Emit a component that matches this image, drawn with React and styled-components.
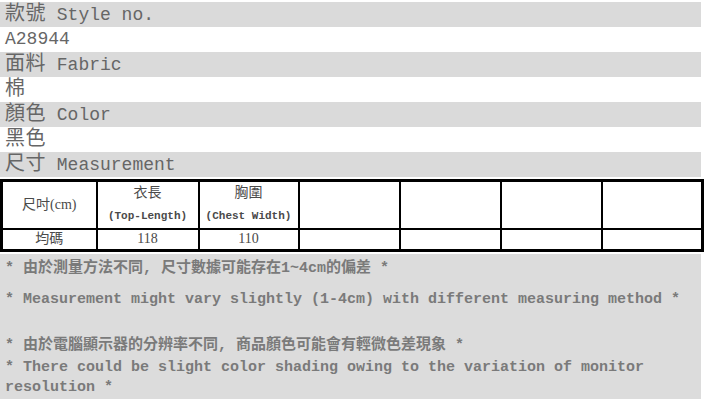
import styled, { createGlobalStyle } from "styled-components";

const GlobalStyle = createGlobalStyle`
  body {
    margin: 0;
    background: #fff;
    font-family: "Liberation Mono", "Noto Sans CJK TC", monospace;
  }
`;

const rows = [
  { cjk: "款號", latin: "Style no.", shade: true },
  { cjk: "", latin: "A28944", shade: false },
  { cjk: "面料", latin: "Fabric", shade: true },
  { cjk: "棉", latin: "", shade: false },
  { cjk: "顏色", latin: "Color", shade: true },
  { cjk: "黑色", latin: "", shade: false },
  { cjk: "尺寸", latin: "Measurement", shade: true },
];

const App = () => {
  return (
    <Page>
      <GlobalStyle />
      {rows.map((r, i) => (
        <InfoRow key={i} shade={r.shade}>
          {r.cjk && <Cjk>{r.cjk}</Cjk>}
          {r.cjk && r.latin ? " " : ""}
          {r.latin}
        </InfoRow>
      ))}

      <SizeTable>
        <colgroup>
          <col style={{ width: 95 }} />
          <col style={{ width: 102 }} />
          <col style={{ width: 100 }} />
          <col style={{ width: 101 }} />
          <col style={{ width: 101 }} />
          <col style={{ width: 101 }} />
          <col style={{ width: 101 }} />
        </colgroup>
        <tbody>
          <HeadRow>
            <Cell>尺吋(cm)</Cell>
            <Cell>
              <CellTop>衣長</CellTop>
              <CellSub>(Top-Length)</CellSub>
            </Cell>
            <Cell>
              <CellTop>胸圍</CellTop>
              <CellSub>(Chest Width)</CellSub>
            </Cell>
            <Cell />
            <Cell />
            <Cell />
            <Cell />
          </HeadRow>
          <ValueRow>
            <Cell>均碼</Cell>
            <Cell>118</Cell>
            <Cell>110</Cell>
            <Cell />
            <Cell />
            <Cell />
            <Cell />
          </ValueRow>
        </tbody>
      </SizeTable>

      <Notes>
        <Note gap={11}>* 由於測量方法不同, 尺寸數據可能存在1~4cm的偏差 *</Note>
        <Note gap={26}>
          * Measurement might vary slightly (1-4cm) with different measuring method *
        </Note>
        <Note gap={2}>* 由於電腦顯示器的分辨率不同, 商品顏色可能會有輕微色差現象 *</Note>
        <Note gap={0}>
          * There could be slight color shading owing to the variation of monitor resolution *
        </Note>
      </Notes>
    </Page>
  );
};

export default App;

const Page = styled.div`
  width: 701px;
  padding-top: 2px;
`;

const InfoRow = styled.div`
  height: 25px;
  line-height: 25px;
  padding-left: 5px;
  font-size: 18px;
  color: #666;
  background: ${(p) => (p.shade ? "#dadada" : "#fff")};
  white-space: nowrap;
`;

const Cjk = styled.span`
  font-size: 20px;
  letter-spacing: 0.5px;
`;

const SizeTable = styled.table`
  margin-top: 2px;
  width: 701px;
  table-layout: fixed;
  border-collapse: collapse;
  border: 3px solid #000;
  font-family: "Liberation Serif", "Noto Sans CJK TC", serif;
  color: #4a4a4a;
`;

const HeadRow = styled.tr`
  height: 48px;
`;

const ValueRow = styled.tr`
  height: 21px;
`;

const Cell = styled.td`
  border: 2px solid #000;
  padding: 0;
  text-align: center;
  vertical-align: middle;
  font-size: 14px;
  line-height: 18px;
`;

const CellTop = styled.div`
  font-size: 14px;
  line-height: 22px;
`;

const CellSub = styled.div`
  font-family: "Liberation Mono", monospace;
  font-size: 11px;
  line-height: 24px;
  font-weight: bold;
`;

const Notes = styled.div`
  margin-top: 2px;
  background: #dcdcdc;
  padding: 5px 0 1px 5px;
  font-size: 15px;
  font-weight: bold;
  color: #7a7a7a;
`;

const Note = styled.div`
  line-height: 20px;
  margin-bottom: ${(p) => p.gap}px;
`;
